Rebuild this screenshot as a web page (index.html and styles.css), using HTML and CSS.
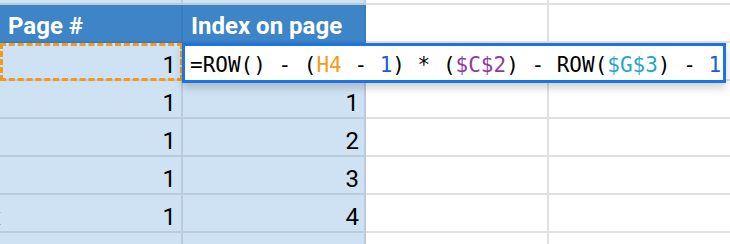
FILE: index.html
```html
<!DOCTYPE html>
<html lang="en">
<head>
    <meta charset="UTF-8">
    <title>Page index sheet</title>
    <link rel="stylesheet" href="styles.css">
</head>
<body>

<div class="sheet">
    <div class="row row-top">
        <div class="cell blue"></div>
        <div class="cell blue"></div>
        <div class="cell"></div>
        <div class="cell"></div>
    </div>
    <div class="row">
        <div class="cell head">Page #</div>
        <div class="cell head">Index on page</div>
        <div class="cell"></div>
        <div class="cell"></div>
    </div>
    <div class="row">
        <div class="cell blue num">1</div>
        <div class="cell blue num"></div>
        <div class="cell"></div>
        <div class="cell"></div>
    </div>
    <div class="row">
        <div class="cell blue num">1</div>
        <div class="cell blue num">1</div>
        <div class="cell"></div>
        <div class="cell"></div>
    </div>
    <div class="row">
        <div class="cell blue num">1</div>
        <div class="cell blue num">2</div>
        <div class="cell"></div>
        <div class="cell"></div>
    </div>
    <div class="row">
        <div class="cell blue num">1</div>
        <div class="cell blue num">3</div>
        <div class="cell"></div>
        <div class="cell"></div>
    </div>
    <div class="row">
        <div class="cell blue num"><span class="spill">x</span>1</div>
        <div class="cell blue num">4</div>
        <div class="cell"></div>
        <div class="cell"></div>
    </div>
    <div class="row">
        <div class="cell blue"></div>
        <div class="cell blue"></div>
        <div class="cell"></div>
        <div class="cell"></div>
    </div>

    <div class="copy-range"></div>
    <div class="formula-editor">=ROW() - (<span class="ref-orange">H4</span> - <span class="lit">1</span>) * (<span class="ref-purple">$C$2</span>) - ROW(<span class="ref-teal">$G$3</span>) - <span class="lit">1</span></div>
</div>

</body>
</html>
```

FILE: styles.css
```css
body {
    margin: 0;
    background-color: #ffffff;
    font-family: Roboto, "Liberation Sans", sans-serif;
    overflow: hidden;
}
.sheet {
    position: relative;
    height: 244px;
    overflow: hidden;
}
.row {
    display: flex;
    height: 38px;
}
.row-top {
    height: 5px;
}
.cell {
    box-sizing: border-box;
    width: 183px;
    flex: none;
    border-right: 2px solid #e1e1e1;
    border-bottom: 2px solid #e1e1e1;
    background-color: #ffffff;
    display: flex;
    align-items: flex-end;
    padding: 0 5px 0 8px;
    font-size: 24px;
    line-height: 28px;
    color: #000000;
    position: relative;
    overflow: hidden;
}
.blue {
    background-color: #cfe2f3;
    border-color: #b9cbdc;
}
.head {
    background-color: #3d85c6;
    border-color: #3a7dba;
    color: #ffffff;
    font-weight: bold;
    padding-bottom: 1px;
}
.num {
    justify-content: flex-end;
}
.spill {
    position: absolute;
    left: -11px;
    bottom: 0;
}
.copy-range {
    position: absolute;
    left: 0;
    top: 43px;
    width: 183px;
    height: 38px;
    box-sizing: border-box;
    border: 3px dashed #f29a1f;
}
.formula-editor {
    position: absolute;
    left: 182px;
    top: 43px;
    width: 544px;
    height: 40px;
    box-sizing: border-box;
    border: 3px solid #1a73e8;
    background-color: #ffffff;
    box-shadow: 0 5px 8px rgba(0, 0, 0, 0.18);
    padding: 4px 0 0 5px;
    font-family: "DejaVu Sans Mono", "Liberation Mono", monospace;
    font-size: 21px;
    line-height: 30px;
    color: #000000;
    white-space: pre;
}
.ref-orange {
    color: #f7981d;
}
.ref-purple {
    color: #8e3aa5;
}
.ref-teal {
    color: #1fa7c9;
}
.lit {
    color: #1a5bd6;
}
```
